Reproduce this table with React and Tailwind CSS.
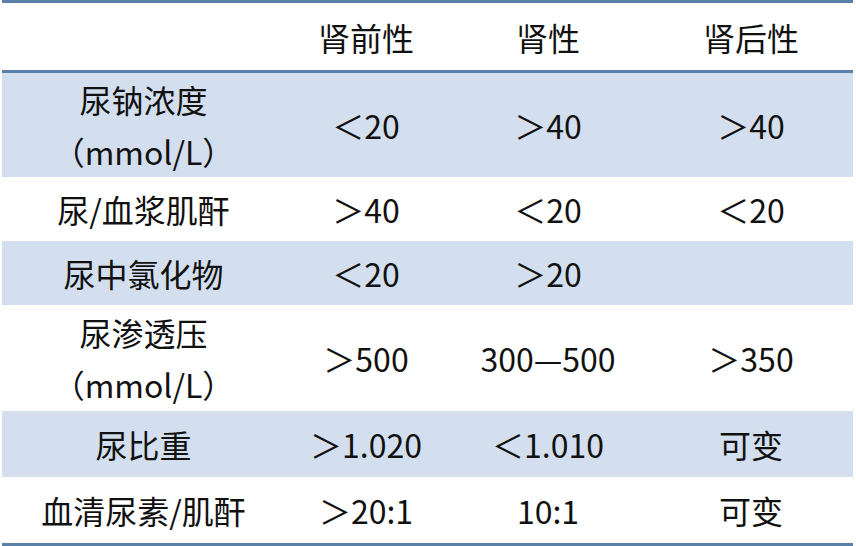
const rows = [
  { h: "h-[104px]", shaded: true, cells: [["尿钠浓度", "（mmol/L）"], "＜20", "＞40", "＞40"] },
  { h: "h-[64px]", shaded: false, cells: ["尿/血浆肌酐", "＞40", "＜20", "＜20"] },
  { h: "h-[64px]", shaded: true, cells: ["尿中氯化物", "＜20", "＞20", ""] },
  { h: "h-[106px]", shaded: false, cells: [["尿渗透压", "（mmol/L）"], "＞500", "300—500", "＞350"] },
  { h: "h-[66px]", shaded: true, cells: ["尿比重", "＞1.020", "＜1.010", "可变"] },
  { h: "h-[66px]", shaded: false, cells: ["血清尿素/肌酐", "＞20:1", "10:1", "可变"] },
];

function Cell({ value }) {
  return (
    <div className="flex flex-col items-center justify-center">
      {Array.isArray(value) ? (
        value.map((line) => (
          <span key={line} className="leading-[52px]">
            {line}
          </span>
        ))
      ) : (
        <span className="leading-[52px]">{value}</span>
      )}
    </div>
  );
}

export default function App() {
  return (
    <div className="w-[856px] h-[546px] bg-white overflow-hidden">
      <div
        className="ml-[2px] w-[851px] border-t-[3px] border-b-[3px] border-[#5a7fa9] text-[32px] text-[#111]"
        style={{ fontFamily: '"Noto Sans CJK SC", sans-serif' }}
      >
        <div className="grid grid-cols-[283px_162px_202px_204px] h-[70px] border-b-[3px] border-[#5a7fa9]">
          <Cell value="" />
          <Cell value="肾前性" />
          <Cell value="肾性" />
          <Cell value="肾后性" />
        </div>
        {rows.map((row, i) => (
          <div
            key={i}
            className={`grid grid-cols-[283px_162px_202px_204px] ${row.h} ${row.shaded ? "bg-[#d3dfee]" : "bg-white"}`}
          >
            {row.cells.map((c, j) => (
              <Cell key={j} value={c} />
            ))}
          </div>
        ))}
      </div>
    </div>
  );
}
